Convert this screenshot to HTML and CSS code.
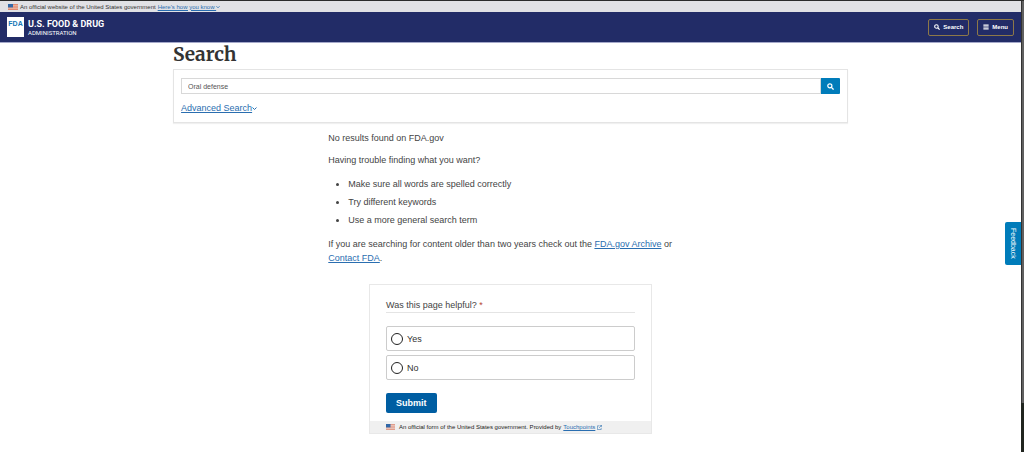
FILE: index.html
```html
<!DOCTYPE html>
<html lang="en">
<head>
  <meta charset="UTF-8">
  <title>Search | FDA</title>
  <meta name="viewport" content="width=device-width, initial-scale=1.0">
  <link rel="stylesheet" href="styles.css">
</head>
<body>
  <div class="page">
    <div class="banner">
      <svg class="flag" viewBox="0 0 22 14" preserveAspectRatio="none">
        <rect width="22" height="14" fill="#f0c8b8"/>
        <path d="M0 1h22M0 5h22M0 9h22M0 13h22" stroke="#dc7c62" stroke-width="2"/>
        <rect width="11" height="8" fill="#3268a8"/>
      </svg>
      <span>An official website of the United States government</span>
      <a href="#">Here's how you know
        <svg class="caret" viewBox="0 0 10 10"><path d="M1 3l4 4 4-4" fill="none" stroke="currentColor" stroke-width="2"/></svg></a>
    </div>

    <header class="header">
      <a class="brand" href="#">
        <span class="brand-box">FDA</span>
        <span class="brand-name">
          <span class="brand-title">U.S. FOOD &amp; DRUG</span>
          <span class="brand-sub">ADMINISTRATION</span>
        </span>
      </a>
      <nav class="header-nav">
        <button class="header-btn" type="button">
          <svg class="icon" viewBox="0 0 16 16"><circle cx="6.5" cy="6.5" r="4.7" fill="none" stroke="currentColor" stroke-width="2.8"/><path d="M10 10l5 5" stroke="currentColor" stroke-width="3.2"/></svg>
          Search
        </button>
        <button class="header-btn" type="button">
          <svg class="icon" viewBox="0 0 16 16"><path d="M1 3h14M1 8h14M1 13h14" stroke="currentColor" stroke-width="3"/></svg>
          Menu
        </button>
      </nav>
    </header>

    <main class="container">
      <h1>Search</h1>

      <form class="search-card">
        <div class="search-row">
          <input type="text" name="q" value="Oral defense" aria-label="Search FDA.gov">
          <button class="search-btn" type="submit" aria-label="Search">
            <svg class="icon" viewBox="0 0 16 16"><circle cx="6.5" cy="6.5" r="4.7" fill="none" stroke="currentColor" stroke-width="2.8"/><path d="M10 10l5 5" stroke="currentColor" stroke-width="3.2"/></svg>
          </button>
        </div>
        <a class="advanced" href="#">Advanced Search<svg class="caret" viewBox="0 0 10 10"><path d="M1 3l4 4 4-4" fill="none" stroke="currentColor" stroke-width="2"/></svg></a>
      </form>

      <section class="results">
        <p>No results found on FDA.gov</p>
        <p>Having trouble finding what you want?</p>
        <ul>
          <li>Make sure all words are spelled correctly</li>
          <li>Try different keywords</li>
          <li>Use a more general search term</li>
        </ul>
        <p>If you are searching for content older than two years check out the <a href="#">FDA.gov Archive</a> or <a href="#">Contact FDA</a>.</p>
      </section>

      <form class="survey">
        <fieldset>
          <legend>Was this page helpful? <span class="required">*</span></legend>
          <label class="option" for="helpful-yes"><input type="radio" id="helpful-yes" name="helpful" value="yes">Yes</label>
          <label class="option" for="helpful-no"><input type="radio" id="helpful-no" name="helpful" value="no">No</label>
          <button class="submit" type="submit">Submit</button>
        </fieldset>
        <div class="survey-footer">
          <svg class="flag" viewBox="0 0 22 14" preserveAspectRatio="none">
            <rect width="22" height="14" fill="#f0d8d0"/>
            <path d="M0 1h22M0 5h22M0 9h22M0 13h22" stroke="#dc8c78" stroke-width="2"/>
            <rect width="11" height="8" fill="#3268a8"/>
          </svg>
          <span>An official form of the United States government. Provided by</span>
          <a href="#">Touchpoints</a>
          <svg class="external" viewBox="0 0 12 12"><path d="M6 2H1v9h9V7M7 1h4v4M11 1L5 7" fill="none" stroke="currentColor" stroke-width="1.4"/></svg>
        </div>
      </form>
    </main>

    <button class="feedback" type="button">Feedback</button>
  </div>
  <div class="rail"><div class="rail-thumb"></div></div>
</body>
</html>
```

FILE: styles.css
```css
:root {
  --navy: #222c67;
  --blue: #007cba;
  --link: #2a6eb0;
  --text: #444;
  --line: #e4e4e4;
}

* {
  margin: 0;
  padding: 0;
  box-sizing: border-box;
}

body {
  display: flex;
  min-height: 100vh;
  border-top: 1px solid #2b2b2b;
  background: #fff;
  color: var(--text);
  font-family: "Liberation Sans", Arial, sans-serif;
  font-size: 9px;
  line-height: 14px;
}

button,
input {
  font-family: inherit;
}

button {
  border: none;
  cursor: pointer;
}

a {
  color: var(--link);
}

.page {
  flex: 1;
  position: relative;
}

.rail {
  width: 3px;
  background: #20251f;
}

.rail-thumb {
  height: 89vh;
  border-left: 1px solid #333;
  background: #606060;
}

/* Government banner */
.banner {
  display: flex;
  align-items: center;
  gap: 2px;
  height: 11px;
  padding-left: 8px;
  background: #e1e1e5;
  color: #333;
  font-size: 6px;
  line-height: 10px;
}

.flag {
  flex: none;
  width: 10px;
  height: 6px;
}

.caret {
  width: 5px;
  height: 5px;
}

.banner .caret {
  width: 4px;
  height: 4px;
}

/* Header */
.header {
  display: flex;
  align-items: center;
  justify-content: space-between;
  height: 31px;
  padding: 0 7px;
  border-bottom: 1px solid #a5a9ca;
  background: var(--navy);
  color: #fff;
}

.brand {
  display: flex;
  align-items: center;
  gap: 4px;
  color: #fff;
  text-decoration: none;
}

.brand-box {
  width: 17px;
  height: 20px;
  background: #fff;
  color: #1778b8;
  font-size: 7px;
  font-weight: bold;
  line-height: 14px;
  text-align: center;
}

.brand-name {
  display: flex;
  flex-direction: column;
  font-family: Roboto, sans-serif;
}

.brand-title {
  font-size: 9px;
  font-weight: 700;
  line-height: 10px;
}

.brand-sub {
  font-size: 6px;
  line-height: 7px;
}

.header-nav {
  display: flex;
  gap: 8px;
}

.header-btn {
  display: flex;
  align-items: center;
  gap: 3px;
  height: 17px;
  padding: 0 5px;
  border: 1px solid #8d7848;
  border-radius: 2px;
  background: transparent;
  color: #fff;
  font-size: 6px;
  font-weight: bold;
}

.icon {
  width: 6px;
  height: 6px;
}

/* Search */
.container {
  width: 66.1%;
  margin: 0 auto;
}

h1 {
  margin-bottom: 4px;
  color: #333;
  font-family: Merriweather, "DejaVu Serif Condensed", "DejaVu Serif", serif;
  font-size: 19px;
  font-weight: bold;
  line-height: 22px;
}

.search-card {
  padding: 8px 7px 7px;
  border: 1px solid var(--line);
  box-shadow: 0 1px 1px #f0f0f0;
}

.search-row {
  display: flex;
  margin-bottom: 7px;
}

.search-row input {
  flex: 1;
  height: 16px;
  padding: 0 6px;
  border: 1px solid #d8d8d8;
  color: #555;
  font-size: 7px;
}

.search-btn {
  width: 19px;
  height: 16px;
  border-radius: 0 1px 1px 0;
  background: var(--blue);
  color: #fff;
  line-height: 0;
}

.search-btn .icon {
  width: 7px;
  height: 7px;
}

/* Results */
.results {
  width: 54%;
  margin: 0 auto;
  padding-top: 8px;
}

.results p {
  margin-bottom: 8px;
}

.results ul {
  padding: 2px 0 4px 20px;
}

.results li {
  margin-bottom: 4px;
}

.results ul + p {
  padding-top: 2px;
}

/* Survey */
.survey {
  width: 283px;
  margin: 19px auto 0;
  border: 1px solid #e8e8e8;
}

.survey fieldset {
  padding: 14px 16px 8px;
  border: none;
}

.survey legend {
  float: left;
  width: 100%;
  margin-bottom: 13px;
  border-bottom: 1px solid var(--line);
  line-height: 13px;
}

.required {
  color: #b5462f;
}

.option {
  display: flex;
  clear: both;
  align-items: center;
  gap: 4px;
  height: 25px;
  margin-bottom: 4px;
  padding: 0 4px;
  border: 1px solid #ccc;
  border-radius: 2px;
  color: #333;
}

.option input {
  appearance: none;
  width: 12px;
  height: 12px;
  border: 1px solid #222;
  border-radius: 50%;
}

.submit {
  height: 20px;
  margin-top: 9px;
  padding: 0 10px;
  border-radius: 2px;
  background: #005ea2;
  color: #fff;
  font-size: 9px;
  font-weight: bold;
}

.survey-footer {
  display: flex;
  align-items: center;
  gap: 2px;
  height: 12px;
  padding-left: 16px;
  background: #f0f0f0;
  color: #222;
  font-size: 6px;
}

.survey-footer .flag {
  width: 9px;
  margin-right: 2px;
}

.external {
  width: 5px;
  height: 5px;
  color: var(--link);
}

/* Feedback tab over the page edge */
.feedback {
  position: absolute;
  top: 221px;
  right: 0;
  width: 16px;
  height: 43px;
  border-radius: 2px 0 0 2px;
  background: var(--blue);
  color: #fff;
  font-size: 7px;
  writing-mode: vertical-rl;
}
```
